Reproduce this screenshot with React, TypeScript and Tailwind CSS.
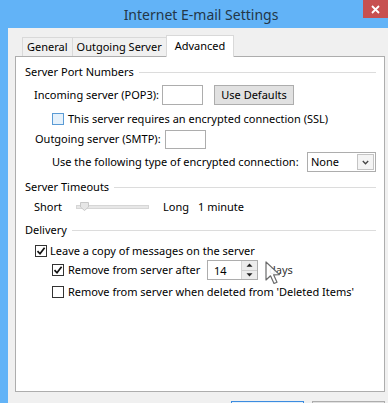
import React from "react";

const font = { fontFamily: '"Segoe UI", "Noto Sans", Arial, sans-serif' };

function Section({ title }: { title: string }) {
  return (
    <div className="flex items-center h-[16px] whitespace-nowrap">
      <span>{title}</span>
      <div className="flex-1 h-px bg-[#dcdcdc] ml-[5px]" />
    </div>
  );
}

function Check({ checked, tint }: { checked?: boolean; tint?: boolean }) {
  return (
    <div
      className={`w-[12px] h-[12px] border flex items-center justify-center shrink-0 ${
        tint ? "border-[#5a9bd5] bg-[#e5f1fb]" : "border-[#333] bg-white"
      }`}
    >
      {checked && (
        <svg width="10" height="10" viewBox="0 0 10 10">
          <path d="M1.5 5.2 L4 7.8 L8.6 1.8" fill="none" stroke="#111" strokeWidth="1.7" />
        </svg>
      )}
    </div>
  );
}

function Tab({ label, active }: { label: string; active?: boolean }) {
  return active ? (
    <div className="h-[22px] px-[8px] bg-white border border-[#d9d9d9] border-b-0 flex items-center -mb-px relative z-10">
      {label}
    </div>
  ) : (
    <div className="h-[19px] px-[4px] bg-[#f0f0f0] border border-[#d9d9d9] border-b-0 flex items-center -mr-px">
      {label}
    </div>
  );
}

export default function App() {
  return (
    <div
      className="w-[388px] h-[403px] overflow-hidden bg-[#f0f0f0] flex text-[11px] text-[#000] relative whitespace-nowrap"
      style={font}
    >
      <div className="w-[8px] bg-[#62b3f7] shrink-0" />
      <div className="flex-1 h-[403px] flex flex-col">
        <div className="h-[28px] shrink-0 bg-[#62b3f7] flex items-start -ml-[8px] pl-[8px]">
          <div className="flex-1 text-center text-[14px] text-[#233748] pt-[4px] pl-[31px]">
            Internet E-mail Settings
          </div>
          <div className="w-[25px] h-[18px] bg-[#c75050] flex items-center justify-center">
            <svg width="9" height="9" viewBox="0 0 9 9">
              <path d="M1 1 L8 8 M8 1 L1 8" stroke="#fff" strokeWidth="1.8" />
            </svg>
          </div>
        </div>

        <div className="flex items-end pl-[14px] mt-[6px] h-[22px] shrink-0">
          <Tab label="General" />
          <Tab label="Outgoing Server" />
          <Tab label="Advanced" active />
        </div>

        <div className="ml-[7px] mr-[3px] flex-1 min-h-0 bg-white border border-[#adadad] pl-[9px] pr-[8px] pt-[7px] flex flex-col">
          <Section title="Server Port Numbers" />

          <div className="flex items-center mt-[5px] h-[20px] pl-[9px]">
            <span className="w-[128px] shrink-0">Incoming server (POP3):</span>
            <div className="w-[41px] h-[20px] border border-[#adadad] bg-white shrink-0" />
            <div className="ml-[11px] w-[80px] h-[20px] border border-[#adadad] bg-[#e1e1e1] flex items-center justify-center shrink-0">
              Use Defaults
            </div>
          </div>

          <div className="flex items-center mt-[7px] h-[14px] pl-[27px] gap-[4px]">
            <Check tint />
            <span>This server requires an encrypted connection (SSL)</span>
          </div>

          <div className="flex items-center mt-[3px] h-[20px] pl-[10px]">
            <span className="w-[130px] shrink-0">Outgoing server (SMTP):</span>
            <div className="w-[41px] h-[19px] border border-[#adadad] bg-white shrink-0" />
          </div>

          <div className="flex items-center mt-[3px] h-[20px] pl-[27px]">
            <span className="flex-1">Use the following type of encrypted connection:</span>
            <div className="w-[69px] h-[20px] border border-[#adadad] bg-white flex items-center pl-[3px] pr-[1px] shrink-0">
              <span className="flex-1">None</span>
              <div className="w-[17px] h-[16px] border border-[#c4c4c4] bg-[#f4f4f4] flex items-center justify-center">
                <svg width="7" height="5" viewBox="0 0 7 5">
                  <path d="M0.8 1 L3.5 3.8 L6.2 1" fill="none" stroke="#444" strokeWidth="1.3" />
                </svg>
              </div>
            </div>
          </div>

          <div className="mt-[7px]">
            <Section title="Server Timeouts" />
          </div>

          <div className="flex items-center mt-[4px] h-[16px] pl-[9px]">
            <span className="w-[42px] shrink-0">Short</span>
            <div className="relative w-[73px] h-[4px] bg-[#e7e7e7] border border-[#d6d6d6] shrink-0">
              <div className="absolute left-[3px] -top-[4px] w-[9px] h-[8px]">
                <svg width="9" height="9" viewBox="0 0 9 9">
                  <path d="M0.5 0.5 H8.5 V5 L4.5 8.5 L0.5 5 Z" fill="#e6e6e6" stroke="#c8c8c8" />
                </svg>
              </div>
            </div>
            <span className="ml-[14px]">Long</span>
            <span className="ml-[9px]">1 minute</span>
          </div>

          <div className="mt-[7px]">
            <Section title="Delivery" />
          </div>

          <div className="flex items-center mt-[5px] h-[16px] pl-[10px] gap-[3px]">
            <Check checked />
            <span>Leave a copy of messages on the server</span>
          </div>

          <div className="flex items-center mt-[1px] h-[20px] pl-[27px]">
            <Check checked />
            <span className="ml-[4px] w-[139px] shrink-0">Remove from server after</span>
            <div className="w-[51px] h-[20px] border border-[#adadad] bg-white flex items-center shrink-0">
              <span className="flex-1 pl-[6px] pt-[3px]">14</span>
              <div className="w-[16px] h-full border-l border-[#d4d4d4] flex flex-col">
                <div className="flex-1 bg-[#ececec] border-b border-[#cfcfcf] flex items-center justify-center">
                  <svg width="7" height="4" viewBox="0 0 7 4"><path d="M0.5 3.8 L3.5 0.5 L6.5 3.8 Z" fill="#222" /></svg>
                </div>
                <div className="flex-1 bg-[#ececec] flex items-center justify-center">
                  <svg width="7" height="4" viewBox="0 0 7 4"><path d="M0.5 0.2 L3.5 3.5 L6.5 0.2 Z" fill="#222" /></svg>
                </div>
              </div>
            </div>
            <span className="ml-[11px] text-[#333]">days</span>
          </div>

          <div className="flex items-center mt-[4px] h-[16px] pl-[27px] gap-[4px]">
            <Check />
            <span>Remove from server when deleted from 'Deleted Items'</span>
          </div>
        </div>

        <div className="h-[11px] shrink-0 flex items-start justify-end gap-[8px] mr-[3px] pt-[9px]">
          <div className="w-[73px] h-[22px] shrink-0 border border-[#3c8ce0] bg-[#e5f1fb]" />
          <div className="w-[73px] h-[22px] shrink-0 border border-[#adadad] bg-[#e1e1e1]" />
        </div>
      </div>

      <svg
        className="absolute left-[265px] top-[261px]"
        width="17"
        height="25"
        viewBox="0 0 17 25"
      >
        <path
          d="M1 1 L1 19 L5.5 14.8 L9 22.5 L12 21.2 L8.6 13.8 L14.5 13.6 Z"
          fill="rgba(255,255,255,0.9)"
          stroke="#6b6b6b"
          strokeWidth="1.2"
          strokeLinejoin="round"
        />
      </svg>
    </div>
  );
}
